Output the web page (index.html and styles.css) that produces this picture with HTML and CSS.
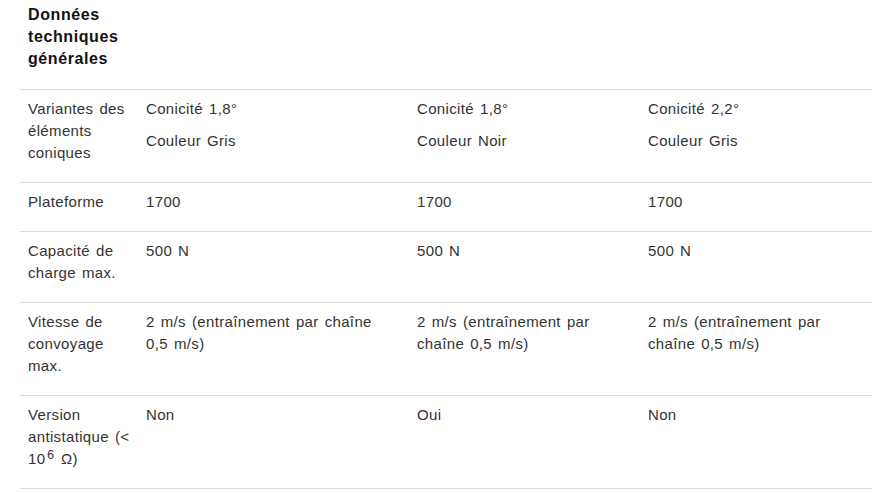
FILE: index.html
```html
<!DOCTYPE html>
<html lang="fr">
<head>
<meta charset="utf-8">
<title>Données techniques générales</title>
<link rel="stylesheet" href="styles.css">
</head>
<body>
<table class="spec">
  <colgroup>
    <col class="c1"><col class="c2"><col class="c3"><col class="c4">
  </colgroup>
  <thead>
    <tr><th class="head">Données techniques générales</th><th></th><th></th><th></th></tr>
  </thead>
  <tbody>
    <tr>
      <td class="label"><p>Variantes des éléments coniques</p></td>
      <td><p>Conicité 1,8°</p><p>Couleur Gris</p></td>
      <td><p>Conicité 1,8°</p><p>Couleur Noir</p></td>
      <td><p>Conicité 2,2°</p><p>Couleur Gris</p></td>
    </tr>
    <tr>
      <td class="label"><p>Plateforme</p></td>
      <td><p>1700</p></td>
      <td><p>1700</p></td>
      <td><p>1700</p></td>
    </tr>
    <tr>
      <td class="label"><p>Capacité de charge max.</p></td>
      <td><p>500 N</p></td>
      <td><p>500 N</p></td>
      <td><p>500 N</p></td>
    </tr>
    <tr>
      <td class="label"><p>Vitesse de convoyage max.</p></td>
      <td><p>2 m/s (entraînement par chaîne 0,5 m/s)</p></td>
      <td><p>2 m/s (entraînement par chaîne 0,5 m/s)</p></td>
      <td><p>2 m/s (entraînement par chaîne 0,5 m/s)</p></td>
    </tr>
    <tr>
      <td class="label"><p>Version antistatique (&lt; 10<span class="exp">⁶</span> Ω)</p></td>
      <td><p>Non</p></td>
      <td><p>Oui</p></td>
      <td><p>Non</p></td>
    </tr>
  </tbody>
</table>
</body>
</html>
```
FILE: styles.css
```css
html, body {
  margin: 0;
  padding: 0;
  background: #ffffff;
}
body {
  font-family: "Liberation Sans", Arial, "DejaVu Sans", sans-serif;
  font-size: 15px;
  line-height: 22px;
  color: #333333;
  letter-spacing: 0.35px;
  word-spacing: 1.5px;
}
.spec {
  margin: 0 0 0 20px;
  width: 852px;
  border-collapse: collapse;
  table-layout: fixed;
}
.c1 { width: 118px; }
.c2 { width: 271px; }
.c3 { width: 231px; }
.c4 { width: 232px; }
.spec th {
  text-align: left;
  vertical-align: top;
  padding: 4px 8px 19px;
  font-size: 16px;
  font-weight: bold;
  letter-spacing: 0.6px;
  color: #111111;
}
.spec td {
  vertical-align: top;
  padding: 8px 24px 8px 8px;
  border-top: 1px solid #dcdcdc;
}
.spec td.label {
  padding-right: 6px;
}
.spec tbody tr:last-child td {
  border-bottom: 1px solid #dcdcdc;
}
.spec p {
  margin: 0 0 10px;
}
.exp {
  font-size: 20px;
  line-height: 0;
  margin-left: 1px;
}
```
